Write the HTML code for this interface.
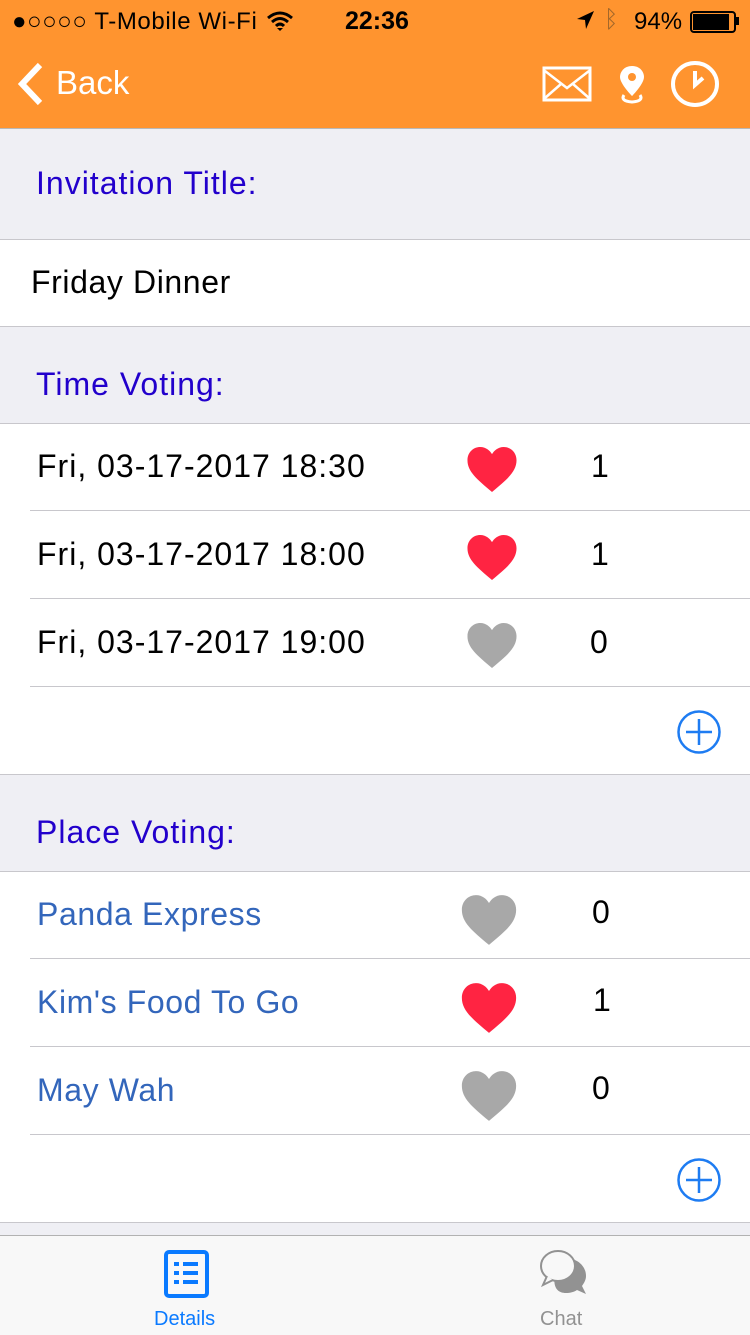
<!DOCTYPE html><html><head><style>
body{margin:0;width:750px;height:1334px;position:relative;overflow:hidden;font-family:"Liberation Sans",sans-serif;background:#EFEFF4}
.a{position:absolute}
.hdr{left:0;top:0;width:750px;height:128px;background:#FF942F;border-bottom:1px solid #b8b8b8}
.lbl{left:36px;font-size:32px;color:#2200CC;letter-spacing:1px}
.wh{left:0;width:750px;background:#fff;border-top:1px solid #c8c7cc;border-bottom:1px solid #c8c7cc}
.sep{left:30px;width:720px;height:1px;background:#c8c7cc}
.t{left:37px;font-size:32px;color:#000;letter-spacing:1px}
.p{left:37px;font-size:32px;color:#3366BB;letter-spacing:0.6px}
.n{font-size:32px;color:#000}
</style></head><body>
<div class="a hdr"></div>
<div class="a" style="left:12px;top:8px;font-size:24px;color:#000;letter-spacing:0.6px">●○○○○ T-Mobile Wi-Fi</div>
<svg class="a" style="left:266px;top:10px" width="28" height="22" viewBox="0 0 28 22"><path d="M2 8Q14-2 26 8M6 12Q14 5 22 12M10 16Q14 12 18 16" stroke="#000" stroke-width="3" fill="none"/><path d="M11 18L14 21L17 18Z" fill="#000"/></svg>
<div class="a" style="left:345px;top:7px;font-size:25px;font-weight:bold;color:#000">22:36</div>
<svg class="a" style="left:575px;top:10px" width="20" height="20"><path d="M19 1L2 9L10 10L11 19Z" fill="#000"/></svg>
<div class="a" style="left:604px;top:6px;font-size:24px;color:#a0662a">ᛒ</div>
<div class="a" style="left:634px;top:8px;font-size:24px;color:#000">94%</div>
<div class="a" style="left:690px;top:11px;width:42px;height:18px;border:2px solid #000;border-radius:4px"></div>
<div class="a" style="left:693px;top:14px;width:36px;height:16px;background:#000"></div>
<div class="a" style="left:736px;top:17px;width:3px;height:8px;background:#000"></div>
<svg class="a" style="left:16px;top:62px" width="28" height="44"><path d="M24 3L6 22L24 41" stroke="#fff" stroke-width="6" fill="none"/></svg>
<div class="a" style="left:56px;top:64px;font-size:33px;color:#fff">Back</div>
<svg class="a" style="left:542px;top:66px" width="50" height="36"><rect x="2" y="2" width="46" height="32" fill="none" stroke="#fff" stroke-width="3"/><path d="M3 5L25 22L47 5M3 32L19 18M47 32L31 18" stroke="#fff" stroke-width="2.5" fill="none"/></svg>
<svg class="a" style="left:616px;top:64px" width="32" height="40"><path d="M16 2C8 2 4 8 4 13C4 20 16 32 16 32C16 32 28 20 28 13C28 8 24 2 16 2Z" fill="#fff"/><circle cx="16" cy="13" r="4" fill="#FF942F"/><path d="M8 31Q4 37 16 38Q28 37 24 31" stroke="#fff" stroke-width="3" fill="none"/></svg>
<svg class="a" style="left:669px;top:60px" width="52" height="48"><ellipse cx="26" cy="24" rx="22" ry="21" fill="none" stroke="#fff" stroke-width="4"/><path d="M26 11V25L34 18" stroke="#fff" stroke-width="4" fill="none"/></svg>

<div class="a lbl" style="top:165px">Invitation Title:</div>
<div class="a wh" style="top:239px;height:86px"></div>
<div class="a t" style="left:31px;top:264px;letter-spacing:0.6px">Friday Dinner</div>
<div class="a lbl" style="top:366px">Time Voting:</div>
<div class="a wh" style="top:423px;height:350px"></div>
<div class="a sep" style="top:510px"></div><div class="a sep" style="top:598px"></div><div class="a sep" style="top:686px"></div>
<div class="a t" style="top:448px">Fri, 03-17-2017 18:30</div>
<div class="a t" style="top:536px">Fri, 03-17-2017 18:00</div>
<div class="a t" style="top:624px">Fri, 03-17-2017 19:00</div>
<div class="a lbl" style="top:814px">Place Voting:</div>
<div class="a wh" style="top:871px;height:350px"></div>
<div class="a sep" style="top:958px"></div><div class="a sep" style="top:1046px"></div><div class="a sep" style="top:1134px"></div>
<div class="a p" style="top:896px">Panda Express</div>
<div class="a p" style="top:984px">Kim's Food To Go</div>
<div class="a p" style="top:1072px">May Wah</div>

<svg width="0" height="0" style="position:absolute"><defs><path id="h" d="M50 90C20 65 2 50 2 28C2 12 14 2 27 2C38 2 46 9 50 16C54 9 62 2 73 2C86 2 98 12 98 28C98 50 80 65 50 90Z"/></defs></svg>
<svg class="a" style="left:465px;top:446px" width="54" height="47" viewBox="0 0 100 92"><use href="#h" fill="#FF2442"/></svg>
<svg class="a" style="left:465px;top:534px" width="54" height="47" viewBox="0 0 100 92"><use href="#h" fill="#FF2442"/></svg>
<svg class="a" style="left:465px;top:622px" width="54" height="47" viewBox="0 0 100 92"><use href="#h" fill="#A8A8A8"/></svg>
<svg class="a" style="left:459px;top:894px" width="60" height="52" viewBox="0 0 100 92"><use href="#h" fill="#A8A8A8"/></svg>
<svg class="a" style="left:459px;top:982px" width="60" height="52" viewBox="0 0 100 92"><use href="#h" fill="#FF2442"/></svg>
<svg class="a" style="left:459px;top:1070px" width="60" height="52" viewBox="0 0 100 92"><use href="#h" fill="#A8A8A8"/></svg>
<div class="a n" style="left:591px;top:448px">1</div>
<div class="a n" style="left:591px;top:536px">1</div>
<div class="a n" style="left:590px;top:624px">0</div>
<div class="a n" style="left:592px;top:894px">0</div>
<div class="a n" style="left:593px;top:982px">1</div>
<div class="a n" style="left:592px;top:1070px">0</div>
<svg class="a" style="left:676px;top:709px" width="46" height="46"><circle cx="23" cy="23" r="20.5" fill="none" stroke="#1E7CF2" stroke-width="2.5"/><path d="M23 10V36M10 23H36" stroke="#1E7CF2" stroke-width="2.5"/></svg>
<svg class="a" style="left:676px;top:1157px" width="46" height="46"><circle cx="23" cy="23" r="20.5" fill="none" stroke="#1E7CF2" stroke-width="2.5"/><path d="M23 10V36M10 23H36" stroke="#1E7CF2" stroke-width="2.5"/></svg>

<div class="a" style="left:0;top:1235px;width:750px;height:99px;background:#F8F8F8;border-top:1px solid #b2b2b2"></div>
<svg class="a" style="left:163px;top:1249px" width="48" height="50"><rect x="3" y="3" width="41" height="44" rx="3" fill="none" stroke="#0A7AFF" stroke-width="4"/><path d="M11 15H16M20 15H35M11 24H16M20 24H35M11 33H16M20 33H35" stroke="#0A7AFF" stroke-width="4"/></svg>
<div class="a" style="left:154px;top:1308px;font-size:20px;color:#0A7AFF">Details</div>
<svg class="a" style="left:537px;top:1248px" width="52" height="50" viewBox="0 0 50 50"><path d="M22 10C36 8 48 16 48 28C48 32 46 35 44 38L48 46L39 42C36 44 32 45 28 45C16 45 12 34 22 10Z" fill="#929292"/><ellipse cx="20" cy="18" rx="17" ry="15" fill="#F8F8F8" stroke="#929292" stroke-width="2"/><path d="M9 28L5 37L15 32" fill="#F8F8F8" stroke="#929292" stroke-width="2"/></svg>
<div class="a" style="left:540px;top:1308px;font-size:20px;color:#929292">Chat</div>
</body></html>
